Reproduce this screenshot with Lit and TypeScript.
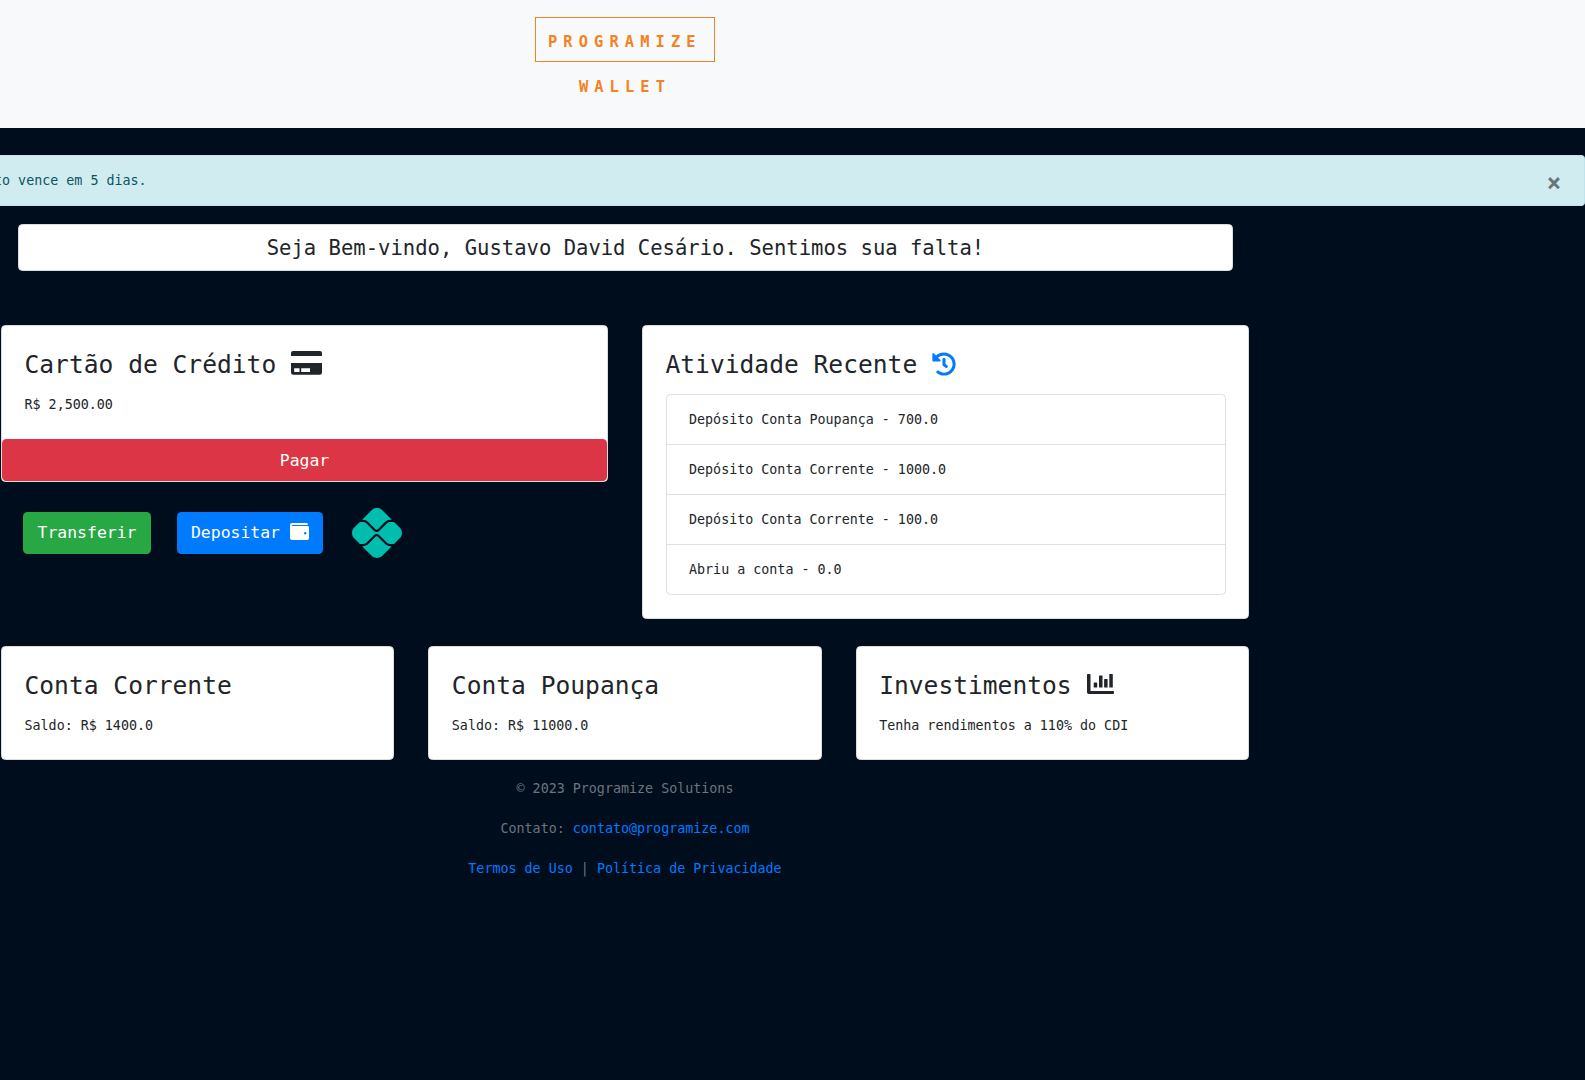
import { LitElement, html, css } from "lit";
import { customElement, state } from "lit/decorators.js";

const activities = [
  "Depósito Conta Poupança - 700.0",
  "Depósito Conta Corrente - 1000.0",
  "Depósito Conta Corrente - 100.0",
  "Abriu a conta - 0.0",
];

const creditCard = html`<svg class="ico-card" viewBox="0 0 31 24">
  <path fill="currentColor" d="M2 0h27a2 2 0 0 1 2 2V5H0V2A2 2 0 0 1 2 0z"/>
  <path fill="currentColor" fill-rule="evenodd" d="M0 12h31v9.500a2.300 2.300 0 0 1-2.300 2.300H2.300A2.300 2.300 0 0 1 0 21.500zM3.200 17.200v3.800h5.300v-3.800zM10.200 17.200v3.800h8.800v-3.800z"/>
</svg>`;

const historyIcon = html`<svg class="ico-history" viewBox="0 0 512 512">
  <path fill="currentColor" d="M504 255.531c.253 136.640-111.180 248.372-247.820 248.468-59.015.042-113.223-20.530-155.822-54.911-11.077-8.940-11.905-25.541-1.839-35.607l11.267-11.267c8.609-8.609 22.353-9.551 31.891-1.984C173.062 425.135 212.781 440 256 440c101.705 0 184-82.311 184-184 0-101.705-82.311-184-184-184-48.814 0-93.149 18.969-126.068 49.932l50.754 50.754c10.080 10.080 2.941 27.314-11.313 27.314H24c-8.837 0-16-7.163-16-16V38.627c0-14.254 17.234-21.393 27.314-11.314l49.372 49.372C129.209 34.136 189.552 8 256 8c136.810 0 247.747 110.780 248 247.531zm-180.912 78.784l9.823-12.630c8.138-10.463 6.253-25.542-4.210-33.679L288 256.349V152c0-13.255-10.745-24-24-24h-16c-13.255 0-24 10.745-24 24v135.651l65.409 50.874c10.463 8.137 25.541 6.253 33.679-4.210z"/>
</svg>`;

const walletIcon = html`<svg class="ico-wallet" viewBox="0 0 19 17">
  <path fill="currentColor" fill-rule="evenodd" d="M2 0h14.500c.900 0 1.300.600 1.300 1.300v.7H2.400c-.400 0-.600.2-.600.500s.200.500.600.500h15.100A1.600 1.600 0 0 1 19 4.700v10.500A1.800 1.800 0 0 1 17.200 17H2A2 2 0 0 1 0 15V2A2 2 0 0 1 2 0zM15.200 9a1.200 1.200 0 1 0 0 2.400 1.200 1.200 0 0 0 0-2.400z"/>
</svg>`;

const chartIcon = html`<svg class="ico-chart" viewBox="0 0 27 21">
  <path fill="currentColor" d="M.8 0h1.900a.8.8 0 0 1 .8.8V17H26.200a.8.8 0 0 1 .8.800V19.200a.8.8 0 0 1-.8.800H1.700A1.700 1.700 0 0 1 0 18.300V.8A.8.8 0 0 1 .8 0z"/>
  <rect fill="currentColor" x="6.700" y="8.500" width="3.500" height="5" rx=".6"/>
  <rect fill="currentColor" x="12" y="1.600" width="3.500" height="11.900" rx=".6"/>
  <rect fill="currentColor" x="17.100" y="5" width="3.500" height="8.500" rx=".6"/>
  <rect fill="currentColor" x="22.300" y="0" width="3.500" height="13.500" rx=".6"/>
</svg>`;

const pixIcon = html`<svg class="ico-pix" viewBox="0 0 512 512">
  <path fill="currentColor" d="M242.400 292.500C247.800 287.100 257.100 287.100 262.500 292.500L339.500 369.500C353.700 383.700 372.600 391.500 392.600 391.500H407.700L310.600 488.600C280.300 518.100 231.100 518.100 200.800 488.600L103.300 391.200H112.600C132.600 391.200 151.500 383.400 165.700 369.200L242.400 292.500zM262.500 218.900C256.100 224.400 247.900 224.500 242.400 218.900L165.700 142.200C151.500 127.100 132.600 120.200 112.600 120.200H103.300L200.700 22.760C231.100-7.586 280.300-7.586 310.600 22.760L407.800 119.900H392.600C372.600 119.900 353.700 127.700 339.500 141.900L262.500 218.900zM112.600 142.700C126.400 142.700 139.100 148.300 149.700 158.100L226.400 234.800C233.600 241.100 243 245.600 252.500 245.600C261.900 245.600 271.300 241.100 278.500 234.800L355.500 157.800C365.300 148.100 378.800 142.500 392.600 142.500H430.300L488.600 200.800C518.900 231.100 518.900 280.300 488.600 310.600L430.300 368.900H392.600C378.800 368.900 365.300 363.300 355.500 353.500L278.500 276.500C264.600 262.600 240.300 262.600 226.400 276.600L149.700 353.200C139.100 363 126.400 368.600 112.600 368.600H80.780L22.760 310.600C-7.586 280.300-7.586 231.100 22.760 200.800L80.780 142.700H112.600z"/>
</svg>`;

@customElement("app-root")
export class AppRoot extends LitElement {
  @state() private alertOpen = true;

  static styles = css`
    :host {
      display: block;
      height: 1080px;
      overflow: hidden;
      background: #000d1d;
      color: #212529;
      font-family: "DejaVu Sans Mono", "Liberation Mono", monospace;
      font-size: 13.35px;
      line-height: 22px;
    }
    * { box-sizing: border-box; }
    svg { display: block; flex: none; }
    p, h1, h2, ul { margin: 0; padding: 0; font-weight: 400; }
    a { color: #007bff; text-decoration: none; }
    .header { height: 128px; background: #f8f9fb; padding-top: 17px; }
    .brand {
      width: 1250px;
      display: flex;
      flex-direction: column;
      align-items: center;
      color: #f58220;
      font-size: 15.4px;
      font-weight: 700;
      letter-spacing: 6.1px;
      line-height: 24px;
    }
    .brand-name {
      border: 1px solid #f58220;
      width: 180px;
      height: 45px;
      padding: 12px 0 0 12px;
      white-space: nowrap;
    }
    .brand-sub { padding-top: 13px; }
    .alert {
      margin-top: 27px;
      height: 51px;
      display: flex;
      justify-content: space-between;
      background: #d1ecf1;
      border: 1px solid #bee5eb;
      border-left: 0;
      border-radius: 0 4px 4px 0;
      color: #0c5460;
      overflow: hidden;
    }
    .alert-text { margin: 14px 0 0 -6px; white-space: pre; }
    .close {
      border: 0;
      background: none;
      padding: 0;
      width: 30px;
      height: 49px;
      margin: 3px 15px 0 0;
      font: 700 24px/49px "DejaVu Sans Mono", monospace;
      color: #000;
      opacity: 0.5;
    }
    .card { background: #fff; border: 1px solid #dcdddf; border-radius: 4.500px; }
    .welcome {
      width: 1215px;
      height: 47px;
      margin: 18px 0 0 18px;
      text-align: center;
      font-size: 20.56px;
      line-height: 47px;
    }
    .main {
      margin: 54px 0 0 1px;
      width: 1248px;
      display: grid;
      grid-template-columns: 1fr 1fr;
      column-gap: 34px;
      height: 294px;
    }
    .body { padding: 26px 22px 0 22.500px; }
    .title {
      font-size: 24.6px;
      line-height: 26px;
      height: 26px;
      display: flex;
      align-items: flex-start;
      gap: 15px;
      white-space: nowrap;
    }
    .body p { margin-top: 16px; }
    .credit { height: 157px; display: flex; flex-direction: column; justify-content: space-between; }
    .btn {
      border: 0;
      border-radius: 4.500px;
      color: #fff;
      font: 400 16.45px/42px "DejaVu Sans Mono", monospace;
      height: 42px;
      padding: 0;
      display: flex;
      justify-content: center;
      gap: 10px;
    }
    .pay { background: #dc3545; width: 100%; line-height: 44px; }
    .actions { display: flex; align-items: flex-start; padding: 26px 0 0 22px; }
    .green { background: #28a745; width: 128px; margin: 4px 26px 0 0; }
    .blue { background: #007bff; width: 146px; margin: 4px 29px 0 0; }
    .list {
      list-style: none;
      margin-top: 16px;
      border: 1px solid #dfdfdf;
      border-radius: 4.500px;
    }
    .list li { height: 50px; line-height: 49px; padding-left: 22.500px; }
    .list li + li { border-top: 1px solid #dfdfdf; }
    .list li:first-child { height: 49px; }
    .accounts {
      margin: 27px 0 0 1px;
      width: 1248px;
      display: grid;
      grid-template-columns: repeat(3, 1fr);
      column-gap: 34px;
    }
    .account { height: 114px; }
    .footer { width: 1250px; text-align: center; color: #6c757d; padding-top: 18px; }
    .footer p { margin-bottom: 18px; }
    .ico-card { width: 31px; height: 24px; margin-top: -1px; }
    .ico-history { width: 24px; height: 24px; color: #007bff; }
    .ico-wallet { width: 19px; height: 17px; margin-top: 11px; }
    .ico-chart { width: 27px; height: 21px; margin-top: 1px; }
    .ico-pix { width: 50px; height: 50px; color: #00bdae; }
  `;

  render() {
    return html`
      <header class="header">
        <div class="brand">
          <div class="brand-name">PROGRAMIZE</div>
          <div class="brand-sub">WALLET</div>
        </div>
      </header>
      ${this.alertOpen
        ? html`<div class="alert" role="alert">
            <span class="alert-text">to vence em 5 dias.</span>
            <button class="close" @click=${() => (this.alertOpen = false)}>×</button>
          </div>`
        : null}
      <h1 class="card welcome">Seja Bem-vindo, Gustavo David Cesário. Sentimos sua falta!</h1>
      <section class="main">
        <div>
          <div class="card credit">
            <div class="body">
              <h2 class="title">Cartão de Crédito ${creditCard}</h2>
              <p>R$ 2,500.00</p>
            </div>
            <button class="btn pay">Pagar</button>
          </div>
          <div class="actions">
            <button class="btn green">Transferir</button>
            <button class="btn blue">Depositar ${walletIcon}</button>
            ${pixIcon}
          </div>
        </div>
        <div class="card body">
          <h2 class="title">Atividade Recente ${historyIcon}</h2>
          <ul class="list">
            ${activities.map((a) => html`<li>${a}</li>`)}
          </ul>
        </div>
      </section>
      <section class="accounts">
        <div class="card body account">
          <h2 class="title">Conta Corrente</h2>
          <p>Saldo: R$ 1400.0</p>
        </div>
        <div class="card body account">
          <h2 class="title">Conta Poupança</h2>
          <p>Saldo: R$ 11000.0</p>
        </div>
        <div class="card body account">
          <h2 class="title">Investimentos ${chartIcon}</h2>
          <p>Tenha rendimentos a 110% do CDI</p>
        </div>
      </section>
      <footer class="footer">
        <p>© 2023 Programize Solutions</p>
        <p>Contato: <a href="#">contato@programize.com</a></p>
        <p><a href="#">Termos de Uso</a> | <a href="#">Política de Privacidade</a></p>
      </footer>
    `;
  }
}
